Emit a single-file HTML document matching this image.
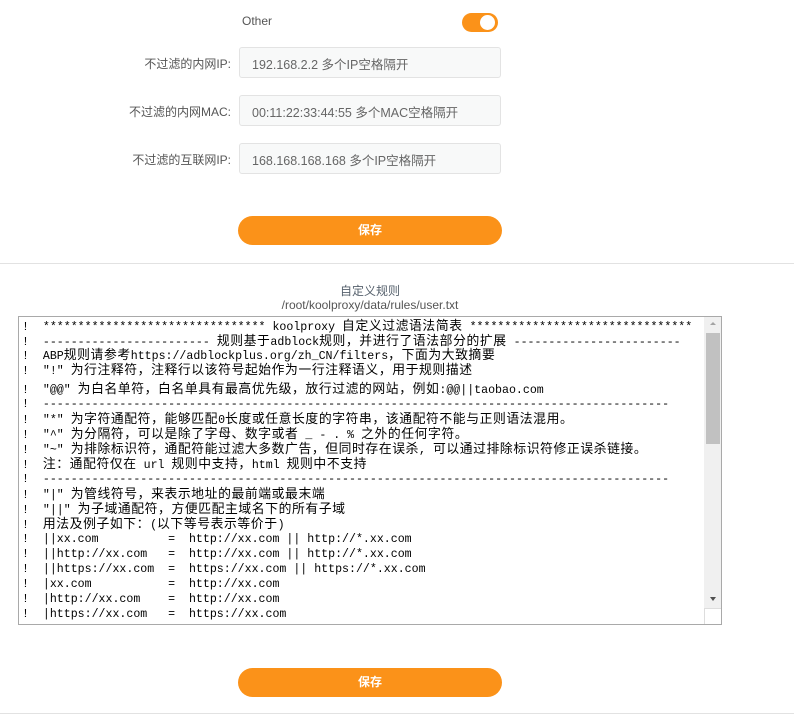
<!DOCTYPE html>
<html><head><meta charset="utf-8"><style>
*{margin:0;padding:0;box-sizing:border-box}
body{width:794px;height:718px;background:#fff;position:relative;overflow:hidden;font-family:"Liberation Sans","Noto Sans CJK SC",sans-serif;color:#555}
.a{position:absolute}
.lbl{position:absolute;font-size:12px;color:#555;text-align:right;width:200px;left:31px}
.inp{position:absolute;left:239px;width:262px;height:31px;border:1px solid #e3e3e3;border-radius:3px;background:#f8f9f9;font-size:12.5px;color:#666;padding:6px 0 0 12px}
.btn{position:absolute;left:238px;width:264px;height:29px;border-radius:15px;background:#fb9219;color:#fff;font-size:12px;font-weight:bold;text-align:center;line-height:29px}
.ta{position:absolute;left:18px;top:316px;width:704px;height:309px;border:1px solid #a9a9a9;overflow:hidden;background:#fff}
.ln{position:absolute;left:3px;white-space:pre;font-family:"Liberation Mono","WenQuanYi Zen Hei","Noto Sans CJK SC",monospace;font-size:11.6px;color:#000;line-height:15px}
.ln b{font-weight:normal;font-size:12.8px;letter-spacing:0.6px}
</style></head><body>
<div class="a" style="left:242px;top:14px;font-size:12px;color:#555">Other</div>
<div class="a" style="left:462px;top:13px;width:36px;height:19px;border-radius:10px;background:#fb9219"></div>
<div class="a" style="left:480px;top:15px;width:15px;height:15px;border-radius:50%;background:#fff"></div>

<div class="lbl" style="top:55px">不过滤的内网IP:</div>
<div class="inp" style="top:47px">192.168.2.2 多个IP空格隔开</div>
<div class="lbl" style="top:103px">不过滤的内网MAC:</div>
<div class="inp" style="top:95px">00:11:22:33:44:55 多个MAC空格隔开</div>
<div class="lbl" style="top:151px">不过滤的互联网IP:</div>
<div class="inp" style="top:143px">168.168.168.168 多个IP空格隔开</div>

<div class="btn" style="top:216px">保存</div>
<div class="a" style="left:0;top:263px;width:794px;height:1px;background:#e2e2e2"></div>

<div class="a" style="left:0;width:740px;top:282px;text-align:center;font-size:12px;color:#56616d">自定义规则</div>
<div class="a" style="left:0;width:740px;top:298px;text-align:center;font-size:12px;color:#555">/root/koolproxy/data/rules/user.txt</div>

<div class="ta">
<div class="ln" style="top:2px">!  ******************************** koolproxy <b>自定义过滤语法简表</b> ********************************</div>
<div class="ln" style="top:17px">!  ------------------------ <b>规则基于</b>adblock<b>规则，并进行了语法部分的扩展</b> ------------------------</div>
<div class="ln" style="top:31px">!  ABP<b>规则请参考</b>https://adblockplus.org/zh_CN/filters<b>，下面为大致摘要</b></div>
<div class="ln" style="top:46px">!  "!" <b>为行注释符，注释行以该符号起始作为一行注释语义，用于规则描述</b></div>
<div class="ln" style="top:65px">!  "@@" <b>为白名单符，白名单具有最高优先级，放行过滤的网站，例如</b>:@@||taobao.com</div>
<div class="ln" style="top:80px">!  ------------------------------------------------------------------------------------------</div>
<div class="ln" style="top:95px">!  "*" <b>为字符通配符，能够匹配</b>0<b>长度或任意长度的字符串，该通配符不能与正则语法混用。</b></div>
<div class="ln" style="top:110px">!  "^" <b>为分隔符，可以是除了字母、数字或者</b> _ - . % <b>之外的任何字符。</b></div>
<div class="ln" style="top:125px">!  "~" <b>为排除标识符，通配符能过滤大多数广告，但同时存在误杀</b>, <b>可以通过排除标识符修正误杀链接。</b></div>
<div class="ln" style="top:140px">!  <b>注：通配符仅在</b> url <b>规则中支持，</b>html <b>规则中不支持</b></div>
<div class="ln" style="top:155px">!  ------------------------------------------------------------------------------------------</div>
<div class="ln" style="top:170px">!  "|" <b>为管线符号，来表示地址的最前端或最末端</b></div>
<div class="ln" style="top:185px">!  "||" <b>为子域通配符，方便匹配主域名下的所有子域</b></div>
<div class="ln" style="top:200px">!  <b>用法及例子如下：</b>(<b>以下等号表示等价于</b>)</div>
<div class="ln" style="top:215px">!  ||xx.com          =  http://xx.com || http://*.xx.com</div>
<div class="ln" style="top:230px">!  ||http://xx.com   =  http://xx.com || http://*.xx.com</div>
<div class="ln" style="top:245px">!  ||https://xx.com  =  https://xx.com || https://*.xx.com</div>
<div class="ln" style="top:260px">!  |xx.com           =  http://xx.com</div>
<div class="ln" style="top:275px">!  |http://xx.com    =  http://xx.com</div>
<div class="ln" style="top:290px">!  |https://xx.com   =  https://xx.com</div>
<div class="a" style="right:0;top:0;width:17px;height:291px;background:#f0f0f0"></div>
<div class="a" style="right:1px;top:16px;width:14px;height:111px;background:#c1c1c1"></div>
<div class="a" style="right:5px;top:5px;width:0;height:0;border-left:3px solid transparent;border-right:3px solid transparent;border-bottom:3px solid #a3a3a3"></div>
<div class="a" style="right:5px;top:280px;width:0;height:0;border-left:3.5px solid transparent;border-right:3.5px solid transparent;border-top:4px solid #505050"></div>
<div class="a" style="right:0;top:291px;width:17px;height:17px;background:#fff;border-left:1px solid #ddd;border-top:1px solid #ddd"></div>
</div>

<div class="btn" style="top:668px">保存</div>
<div class="a" style="left:0;top:713px;width:794px;height:1px;background:#e2e2e2"></div>
</body></html>
